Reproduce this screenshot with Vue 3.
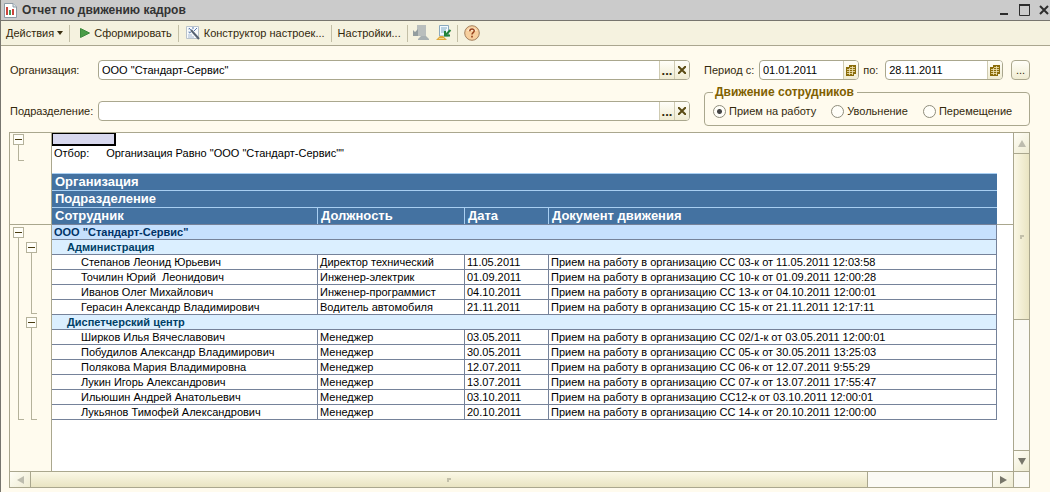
<script setup>
import { ref } from 'vue'

const organization = ref('ООО "Стандарт-Сервис"')
const department = ref('')
const dateFrom = ref('01.01.2011')
const dateTo = ref('28.11.2011')
const movement = ref('hire')

const movements = [
  { id: 'hire', label: 'Прием на работу' },
  { id: 'fire', label: 'Увольнение' },
  { id: 'move', label: 'Перемещение' },
]

const doc = 'Прием на работу в организацию '
const groups = [
  {
    name: 'Администрация',
    rows: [
      ['Степанов Леонид Юрьевич', 'Директор технический', '11.05.2011', doc + 'СС 03-к от 11.05.2011 12:03:58'],
      ['Точилин Юрий  Леонидович', 'Инженер-электрик', '01.09.2011', doc + 'СС 10-к от 01.09.2011 12:00:28'],
      ['Иванов Олег Михайлович', 'Инженер-программист', '04.10.2011', doc + 'СС 13-к от 04.10.2011 12:00:01'],
      ['Герасин Александр Владимирович', 'Водитель автомобиля', '21.11.2011', doc + 'СС 15-к от 21.11.2011 12:17:11'],
    ],
  },
  {
    name: 'Диспетчерский центр',
    rows: [
      ['Ширков Илья Вячеславович', 'Менеджер', '03.05.2011', doc + 'СС 02/1-к от 03.05.2011 12:00:01'],
      ['Побудилов Александр Владимирович', 'Менеджер', '30.05.2011', doc + 'СС 05-к от 30.05.2011 13:25:03'],
      ['Полякова Мария Владимировна', 'Менеджер', '12.07.2011', doc + 'СС 06-к от 12.07.2011 9:55:29'],
      ['Лукин Игорь Александрович', 'Менеджер', '13.07.2011', doc + 'СС 07-к от 13.07.2011 17:55:47'],
      ['Ильюшин Андрей Анатольевич', 'Менеджер', '03.10.2011', doc + 'СС12-к от 03.10.2011 12:00:01'],
      ['Лукьянов Тимофей Александрович', 'Менеджер', '20.10.2011', doc + 'СС 14-к от 20.10.2011 12:00:00'],
    ],
  },
]
</script>

<template>
  <div class="window">
    <header class="titlebar">
      <svg class="title-icon" width="13" height="15" viewBox="0 0 13 15">
        <path d="M.5 .5H9L12.500 4V14.500H.5Z" fill="#fff" stroke="#8d9ba6" />
        <path d="M9 .5V4H12.500" fill="#dfe6ea" stroke="#8d9ba6" />
        <path d="M2 4h2v8H2z" fill="#c9443c" />
        <path d="M5 7h2v5H5z" fill="#3f9a58" />
        <path d="M8 6h2v6H8z" fill="#c9443c" />
      </svg>
      <h1>Отчет по движению кадров</h1>
      <div class="window-buttons">
        <button type="button" aria-label="Свернуть">
          <svg width="12" height="12" viewBox="0 0 12 12"><path d="M2 10H10" stroke="#2d2d2d" stroke-width="2" /></svg>
        </button>
        <button type="button" aria-label="Развернуть">
          <svg width="12" height="12" viewBox="0 0 12 12"><path d="M1.500 1.500H11.500V11.500H1.500Z" fill="none" stroke="#2d2d2d" /><path d="M1 1H12" stroke="#2d2d2d" stroke-width="2" /></svg>
        </button>
        <button type="button" aria-label="Закрыть">
          <svg width="12" height="12" viewBox="0 0 12 12"><path d="M2 2L10 10M10 2L2 10" stroke="#2d2d2d" stroke-width="2" /></svg>
        </button>
      </div>
    </header>

    <nav class="toolbar">
      <button type="button" class="tool">Действия
        <svg width="6" height="4" viewBox="0 0 6 4"><path d="M0 0H6L3 4Z" fill="#3a2f10" /></svg>
      </button>
      <span class="sep"></span>
      <button type="button" class="tool run">
        <svg width="10" height="12" viewBox="0 0 10 12"><path d="M.5 1.500L9.500 6L.5 10.500Z" fill="#4a9c46" stroke="#3b8a3c" /></svg>
        Сформировать
      </button>
      <span class="sep"></span>
      <button type="button" class="tool">
        <svg width="16" height="16" viewBox="0 0 16 16">
          <path d="M1.500 1.500H13.500V13.500H1.500Z" fill="#f7fafc" stroke="#b9c2cb" />
          <path d="M3 4H5M3 7H5M3 10H7M3 12H9" stroke="#a5b8d2" />
          <path d="M6 5L14 14" stroke="#566272" stroke-width="2" />
          <path d="M4 3L6 5M8 2V4M9 6L12 3M4 8L6 7" stroke="#5a7ab0" />
        </svg>
        Конструктор настроек...
      </button>
      <span class="sep"></span>
      <button type="button" class="tool">Настройки...</button>
      <span class="sep"></span>
      <button type="button" class="tool icon" aria-label="Сохранить значения">
        <svg width="16" height="16" viewBox="0 0 16 16">
          <path d="M4 0H13V11H4Z" fill="#b9bebd" />
          <path d="M0 5L2 7L5 4V11H0V9Z" fill="#939d9f" />
          <path d="M5 14L8 11H13L16 14V15H5Z" fill="#a8b0b2" />
        </svg>
      </button>
      <button type="button" class="tool icon" aria-label="Восстановить значения">
        <svg width="16" height="16" viewBox="0 0 16 16">
          <path d="M3.500 .5H12.500V11H3.500Z" fill="#f4faff" stroke="#8aa9bf" />
          <path d="M5 3H11M5 5H10M5 7H8" stroke="#7faac4" />
          <path d="M14.500 5L10 9.500M9 6V10.500H14" fill="none" stroke="#25843a" stroke-width="2" />
          <path d="M0 15L4 11H7L11 15Z" fill="#e0a83c" />
          <path d="M3 13.500H8" stroke="#f5d78a" />
        </svg>
      </button>
      <span class="sep"></span>
      <button type="button" class="tool" aria-label="Справка">
        <svg width="16" height="16" viewBox="0 0 16 16">
          <circle cx="8" cy="8" r="7.300" fill="#f7cf9e" stroke="#a5805e" />
          <path d="M3 6A5.500 5.500 0 0 1 13 6Z" fill="#fce6c8" />
          <path d="M5.800 6.200C5.800 3.200 10.400 3.400 10.200 6C10.100 7.600 8 7.600 8 9.500" fill="none" stroke="#96401c" stroke-width="1.500" />
          <path d="M7.200 10.800h1.600v1.600H7.200z" fill="#96401c" />
        </svg>
      </button>
    </nav>

    <form class="filters" @submit.prevent>
      <div class="selectors">
        <div class="field-row">
          <label for="org">Организация:</label>
          <div class="field">
            <input id="org" v-model="organization" type="text" />
            <button type="button" class="dots" aria-label="Выбрать организацию">...</button>
            <button type="button" aria-label="Очистить организацию" @click="organization = ''">
              <svg width="8" height="8" viewBox="0 0 8 8"><path d="M0 0L8 8M8 0L0 8" stroke="#5a4a12" stroke-width="2" /></svg>
            </button>
          </div>
        </div>
        <div class="field-row">
          <label for="dep">Подразделение:</label>
          <div class="field">
            <input id="dep" v-model="department" type="text" />
            <button type="button" class="dots" aria-label="Выбрать подразделение">...</button>
            <button type="button" aria-label="Очистить подразделение" @click="department = ''">
              <svg width="8" height="8" viewBox="0 0 8 8"><path d="M0 0L8 8M8 0L0 8" stroke="#5a4a12" stroke-width="2" /></svg>
            </button>
          </div>
        </div>
      </div>

      <div class="period-side">
        <div class="period">
          <label class="from-label" for="from">Период с:</label>
          <div class="field date-from">
            <input id="from" v-model="dateFrom" type="text" />
            <button type="button" aria-label="Календарь начала">
              <svg width="10" height="11" viewBox="0 0 10 11"><path d="M3 0H10V9H8V11H0V2H3Z" fill="#8a6c0a" /><path d="M1 4.500H9M1 6.500H9M1 8.500H7M4 2.500H9M3.500 3V10M6.500 1V10" stroke="#f2e6b4" stroke-width=".8" /></svg>
            </button>
          </div>
          <label class="to-label" for="to">по:</label>
          <div class="field date-to">
            <input id="to" v-model="dateTo" type="text" />
            <button type="button" aria-label="Календарь окончания">
              <svg width="10" height="11" viewBox="0 0 10 11"><path d="M3 0H10V9H8V11H0V2H3Z" fill="#8a6c0a" /><path d="M1 4.500H9M1 6.500H9M1 8.500H7M4 2.500H9M3.500 3V10M6.500 1V10" stroke="#f2e6b4" stroke-width=".8" /></svg>
            </button>
          </div>
          <button type="button" class="period-button" aria-label="Выбрать период">...</button>
        </div>
        <fieldset>
          <legend>Движение сотрудников</legend>
          <div class="radios">
            <label v-for="m in movements" :key="m.id">
              <input v-model="movement" type="radio" name="movement" :value="m.id" />{{ m.label }}
            </label>
          </div>
        </fieldset>
      </div>
    </form>

    <main class="report">
      <div class="gutter">
        <div class="tree tree-top">
          <button type="button" class="toggle" aria-label="Свернуть отбор"></button>
          <span class="branch"></span>
        </div>
      </div>
      <div class="gutter gutter-body">
        <div class="tree">
          <button type="button" class="toggle" aria-label="Свернуть организацию"></button>
          <span class="branch"></span>
        </div>
        <div class="subtrees">
          <div v-for="g in groups" :key="g.name" class="tree" :style="{ height: (g.rows.length + 1) * 15 + 'px' }">
            <button type="button" class="toggle" :aria-label="'Свернуть ' + g.name"></button>
            <span class="branch"></span>
          </div>
        </div>
      </div>
      <div class="frozen"></div>
      <section class="sheet">
        <div class="active-cell"></div>
        <p class="selection"><span>Отбор:</span><span>Организация Равно "ООО "Стандарт-Сервис""</span></p>
        <table>
          <colgroup><col class="c-name" /><col class="c-post" /><col class="c-date" /><col /></colgroup>
          <thead>
            <tr><th colspan="4">Организация</th></tr>
            <tr><th colspan="4">Подразделение</th></tr>
            <tr><th>Сотрудник</th><th>Должность</th><th>Дата</th><th>Документ движения</th></tr>
          </thead>
          <tbody>
            <tr class="org"><td colspan="4">ООО "Стандарт-Сервис"</td></tr>
          </tbody>
          <tbody v-for="g in groups" :key="g.name">
            <tr class="dep"><td colspan="4">{{ g.name }}</td></tr>
            <tr v-for="r in g.rows" :key="r[0]" class="person">
              <td v-for="(cell, i) in r" :key="i">{{ cell }}</td>
            </tr>
          </tbody>
        </table>
      </section>
      <div class="scroll vertical">
        <button type="button" aria-label="Вверх"><svg width="8" height="7" viewBox="0 0 8 7"><path d="M4 0L8 7H0Z" fill="#bdbcae" /></svg></button>
        <div class="thumb"><i></i></div>
        <div class="track"></div>
        <button type="button" aria-label="Вниз"><svg width="8" height="7" viewBox="0 0 8 7"><path d="M0 0H8L4 7Z" fill="#77766a" /></svg></button>
      </div>
      <div class="scroll horizontal">
        <button type="button" aria-label="Влево"><svg width="7" height="8" viewBox="0 0 7 8"><path d="M7 0V8L0 4Z" fill="#bdbcae" /></svg></button>
        <div class="thumb"><i></i></div>
        <div class="track"></div>
        <button type="button" aria-label="Вправо"><svg width="7" height="8" viewBox="0 0 7 8"><path d="M0 0V8L7 4Z" fill="#77766a" /></svg></button>
      </div>
      <div class="corner"></div>
    </main>
  </div>
</template>

<style>
body {
  margin: 0;
  background: #fffbee;
}
</style>

<style scoped>
* {
  box-sizing: border-box;
}
.window {
  min-height: 100vh;
  display: flex;
  flex-direction: column;
  background: #fffbee;
  border-left: 1px solid #77756e;
  font: 11px/15px "Liberation Sans", Arial, sans-serif;
  color: #33290c;
}
button,
input {
  font: inherit;
  color: inherit;
  margin: 0;
  padding: 0;
  border: 0;
  background: none;
}
button {
  display: flex;
  align-items: center;
  justify-content: center;
}
svg {
  flex: none;
  display: block;
}

.titlebar {
  display: flex;
  align-items: center;
  height: 21px;
  padding: 0 0 0 3px;
  gap: 5px;
  background: #cbcbcb;
  border-bottom: 1px solid #77756e;
}
.titlebar h1 {
  margin: 0;
  flex: 1;
  font-size: 12px;
  font-weight: bold;
  color: #333;
}
.window-buttons {
  display: flex;
  gap: 8px;
}

.toolbar {
  display: flex;
  align-items: center;
  height: 25px;
  padding-left: 5px;
  background: #f5f2df;
  border-bottom: 1px solid #aaa68f;
}
.tool {
  gap: 3px;
  white-space: nowrap;
}
.tool.run {
  gap: 4px;
  padding-left: 4px;
}
.tool.icon {
  width: 23px;
}
.sep {
  width: 1px;
  height: 17px;
  margin: 0 6px;
  background: #c3bfa6;
}
.icon + .sep {
  margin-left: 1px;
}
.sep:has(+ .icon) {
  margin-right: 2px;
}

.filters {
  display: flex;
  align-items: flex-start;
  padding: 14px 20px 0 9px;
  gap: 14px;
}
.selectors {
  flex: 1;
  display: flex;
  flex-direction: column;
  gap: 21px;
}
.field-row {
  display: flex;
  align-items: center;
}
.field-row label {
  width: 88px;
}
.field {
  display: flex;
  flex: 1;
  height: 20px;
  background: #fff;
  border: 1px solid #aaa78e;
  border-radius: 4px;
  overflow: hidden;
}
.field input {
  flex: 1;
  min-width: 0;
  padding-left: 3px;
  color: #000;
  outline: none;
}
.field button {
  width: 15px;
  background: linear-gradient(#fffef8, #f0ecd2);
  border-left: 1px solid #cfcbb2;
}
.field .dots {
  font-size: 13px;
  font-weight: bold;
}
.period-side {
  width: 326px;
}
.period {
  display: flex;
  align-items: center;
}
.from-label {
  width: 55px;
}
.to-label {
  width: 26px;
  padding-left: 4px;
}
.date-from {
  flex: 100 1 0;
}
.date-to {
  flex: 118 1 0;
}
.period-button {
  width: 19px;
  height: 20px;
  margin-left: 8px;
  border: 1px solid #aaa78e;
  border-radius: 4px;
  background: linear-gradient(#fffef8, #f0ecd2);
}
fieldset {
  margin: 5px 0 0;
  padding: 0 0 0 8px;
  height: 41px;
  border: 1px solid #aaa78e;
  border-radius: 4px;
}
legend {
  padding: 0 3px 0 2px;
  font-size: 12px;
  font-weight: bold;
  color: #806000;
}
.radios {
  display: flex;
  gap: 15px;
  padding-top: 4px;
}
.radios label {
  display: flex;
  align-items: center;
  gap: 3px;
  white-space: nowrap;
}
.radios input {
  appearance: none;
  width: 13px;
  height: 13px;
  border: 1px solid #8f8d7c;
  border-radius: 50%;
  background: #fffef8;
}
.radios input:checked {
  background: radial-gradient(circle, #444 0 2px, #fffef8 3px);
}

.report {
  flex: 1;
  display: grid;
  grid-template-columns: 42px 1fr 16px;
  grid-template-rows: 91px 1fr 16px;
  margin: 6px 20px 4px 8px;
  border: 1px solid #aaa78e;
  background: #fff;
}
.gutter {
  grid-column: 1;
  grid-row: 1;
  display: flex;
  gap: 2px;
  padding: 1px 0 0 3px;
  background: #fffbee;
  border-right: 1px solid #aaa78e;
}
.gutter-body {
  grid-row: 2;
  align-items: flex-start;
  border-top: 1px solid #aaa78e;
  padding-top: 2px;
}
.tree {
  width: 11px;
  display: flex;
  flex-direction: column;
}
.tree-top {
  height: 27px;
}
.gutter-body > .tree {
  height: 193px;
}
.subtrees {
  padding-top: 15px;
}
.subtrees .tree {
  padding-bottom: 3px;
}
.subtrees .tree:last-child {
  padding-bottom: 2px;
}
.toggle {
  flex: none;
  width: 11px;
  height: 11px;
  border: 1px solid #b5b29b;
  background: linear-gradient(#4a3c10, #4a3c10) center / 7px 1px no-repeat #fffef8;
}
.branch {
  flex: 1;
  width: 6px;
  margin-left: 5px;
  border: solid #b5b29b;
  border-width: 0 0 1px 1px;
}
.frozen {
  grid-column: 2;
  grid-row: 1;
  box-shadow: 0 1px #aaa78e;
}
.sheet {
  grid-column: 2;
  grid-row: 1 / 3;
  padding-right: 16px;
  color: #000;
}
.active-cell {
  width: 64px;
  height: 13px;
  border: 1px solid #000;
  border-right-width: 2px;
  border-bottom-width: 2px;
  background: #d8d8ee;
}
.selection {
  display: flex;
  gap: 17px;
  height: 27px;
  margin: 0;
  padding-left: 2px;
}
table {
  width: 100%;
  table-layout: fixed;
  border-collapse: separate;
  border-spacing: 0;
}
.c-name {
  width: 265px;
}
.c-post {
  width: 147px;
}
.c-date {
  width: 84px;
}
th {
  height: 17px;
  padding: 0 0 0 3px;
  border-top: 1px solid #a9cff2;
  background: #4472a1;
  color: #fff;
  font-size: 13px;
  line-height: 16px;
  text-align: left;
  white-space: nowrap;
}
th + th {
  border-left: 1px solid #a9cff2;
}
td {
  height: 15px;
  padding: 0 0 0 2px;
  border-top: 1px solid #75829a;
  line-height: 14px;
  white-space: pre;
  overflow: hidden;
}
td + td {
  border-left: 1px solid #75829a;
}
td:last-child {
  border-right: 1px solid #75829a;
}
tbody:last-child tr:last-child td {
  border-bottom: 1px solid #75829a;
}
.org td {
  background: #c6e0fd;
  color: #003366;
  font-weight: bold;
}
.dep td {
  padding-left: 15px;
  background: #dbefff;
  color: #003f66;
  font-weight: bold;
}
.person td:first-child {
  padding-left: 29px;
}

.scroll {
  display: flex;
}
.scroll button {
  flex: none;
  background: linear-gradient(135deg, #fffef6, #eeebd2);
}
.thumb {
  display: flex;
  align-items: center;
  justify-content: center;
}
.thumb i {
  width: 4px;
  height: 4px;
  border: solid #c3c0aa;
  border-width: 2px 0 0 2px;
}
.track {
  background: #fbfaf4;
}
.vertical {
  grid-column: 3;
  grid-row: 1 / 3;
  flex-direction: column;
  border-left: 1px solid #aaa78e;
}
.vertical button {
  height: 20px;
}
.vertical .thumb {
  flex: 167;
  border: solid #aaa78e;
  border-width: 1px 0;
  background: linear-gradient(90deg, #fbf8e6, #e9e4c2);
}
.vertical .track {
  flex: 131;
  border-bottom: 1px solid #aaa78e;
}
.horizontal {
  grid-column: 1 / 3;
  grid-row: 3;
  border-top: 1px solid #aaa78e;
}
.horizontal button {
  width: 20px;
}
.horizontal .thumb {
  flex: 839;
  border: solid #aaa78e;
  border-width: 0 1px;
  background: linear-gradient(#fbf8e6, #e9e4c2);
}
.horizontal .track {
  flex: 124;
  border-right: 1px solid #aaa78e;
}
.corner {
  grid-column: 3;
  grid-row: 3;
  border: solid #aaa78e;
  border-width: 1px 0 0 1px;
  background: #fbfaf4;
}
</style>
